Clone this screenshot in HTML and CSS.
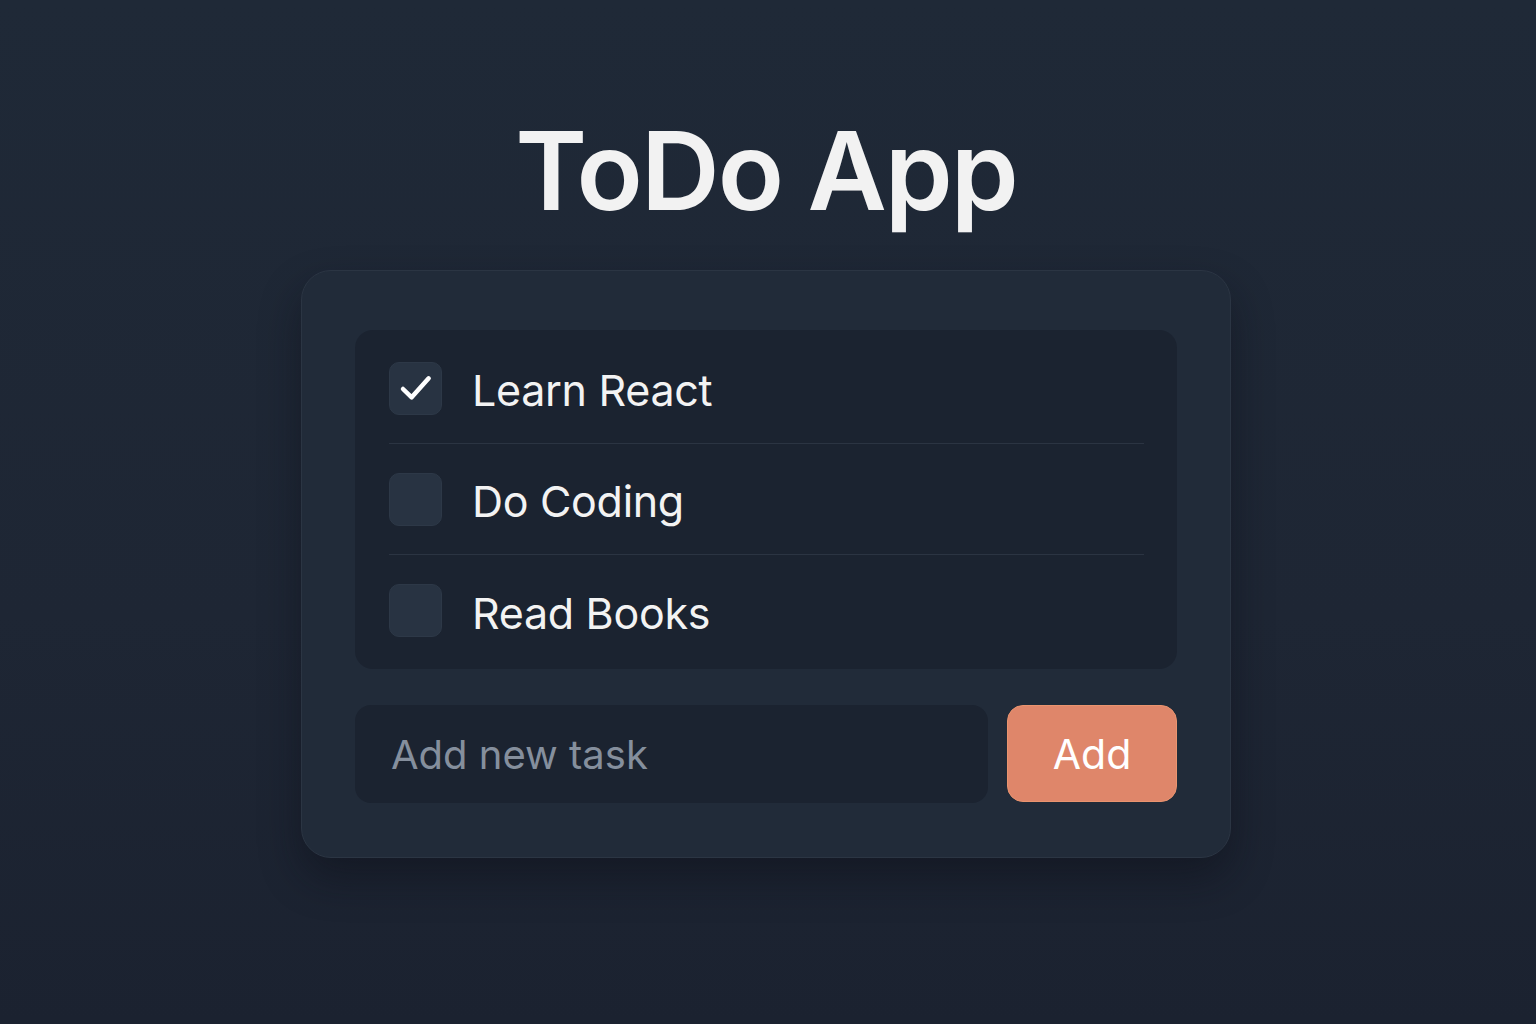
FILE: index.html
```html
<!DOCTYPE html>
<html lang="en">
<head>
<meta charset="utf-8">
<title>ToDo App</title>
<link rel="stylesheet" href="styles.css">
</head>
<body>
<main class="page">
  <h1 class="title">ToDo App</h1>
  <section class="card">
    <ul class="list">
      <li class="item">
        <span class="box checked">
          <svg viewBox="0 0 24 24" width="40" height="40" aria-hidden="true"><path d="M4.2 12.6 L9.4 17.6 L19.6 6.2" fill="none" stroke="#ffffff" stroke-width="2.7" stroke-linecap="round" stroke-linejoin="round"/></svg>
        </span>
        <span class="label">Learn React</span>
      </li>
      <li class="item">
        <span class="box"></span>
        <span class="label">Do Coding</span>
      </li>
      <li class="item">
        <span class="box"></span>
        <span class="label">Read Books</span>
      </li>
    </ul>
    <form class="add-row">
      <input class="input" type="text" placeholder="Add new task">
      <button class="btn" type="button">Add</button>
    </form>
  </section>
</main>
</body>
</html>
```
FILE: styles.css
```css
* { box-sizing: border-box; }
html, body { margin: 0; height: 100%; }
body {
  background: linear-gradient(180deg, #1f2937 0%, #1e2634 60%, #1b2230 100%);
  font-family: Inter, "Noto Sans", sans-serif;
  color: #f1f1f1;
}
.page {
  display: flex;
  flex-direction: column;
  align-items: center;
  padding-top: 101px;
}
.title {
  margin: 0 4px 0 0;
  font-size: 109px;
  font-weight: 600;
  letter-spacing: -2px;
  line-height: 138px;
  color: #f2f2f2;
}
.card {
  margin: 31px 4px 0 0;
  width: 930px;
  background: #212b39;
  border: 1px solid #2b3543;
  border-radius: 30px;
  padding: 59px 53px 54px 53px;
  box-shadow: 0 20px 40px rgba(10, 14, 22, 0.45);
}
.list {
  list-style: none;
  margin: 0;
  padding: 3px 33px 3px 34px;
  background: #1b2330;
  border-radius: 18px;
}
.item {
  display: flex;
  align-items: center;
  gap: 30px;
  height: 111px;
  border-bottom: 1px solid #2b3442;
}
.item:last-child { border-bottom: none; }
.box {
  width: 53px;
  height: 53px;
  border-radius: 10px;
  background: #283342;
  border: 1px solid #2d3847;
  display: flex;
  align-items: center;
  justify-content: center;
  flex: none;
}
.label {
  font-size: 43px;
  font-weight: 400;
  letter-spacing: -0.3px;
  color: #f3f3f3;
  position: relative;
  top: 2px;
}
.add-row {
  display: flex;
  gap: 19px;
  margin-top: 36px;
}
.input {
  flex: 1 1 auto;
  min-width: 0;
  width: 0;
  height: 98px;
  border: none;
  outline: none;
  border-radius: 16px;
  background: #1b2330;
  padding: 0 36px;
  font-family: Inter, "Noto Sans", sans-serif;
  font-size: 40px;
  color: #e6e6e6;
}
.input::placeholder { color: #858f9d; }
.btn {
  flex: none;
  width: 170px;
  height: 97px;
  border: 1px solid #e9946f;
  border-radius: 16px;
  background: #df866a;
  color: #ffffff;
  font-family: Inter, "Noto Sans", sans-serif;
  font-size: 41px;
  font-weight: 400;
}
```
